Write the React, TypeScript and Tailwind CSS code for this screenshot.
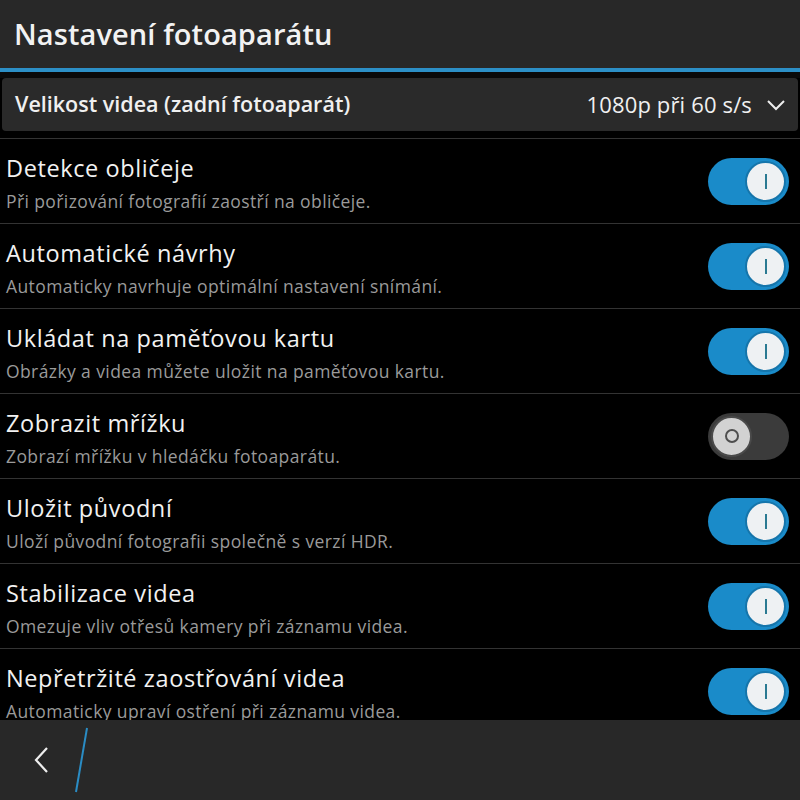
import React from "react";

const rows: { title: string; sub: string; on: boolean }[] = [
  { title: "Detekce obličeje", sub: "Při pořizování fotografií zaostří na obličeje.", on: true },
  { title: "Automatické návrhy", sub: "Automaticky navrhuje optimální nastavení snímání.", on: true },
  { title: "Ukládat na paměťovou kartu", sub: "Obrázky a videa můžete uložit na paměťovou kartu.", on: true },
  { title: "Zobrazit mřížku", sub: "Zobrazí mřížku v hledáčku fotoaparátu.", on: false },
  { title: "Uložit původní", sub: "Uloží původní fotografii společně s verzí HDR.", on: true },
  { title: "Stabilizace videa", sub: "Omezuje vliv otřesů kamery při záznamu videa.", on: true },
  { title: "Nepřetržité zaostřování videa", sub: "Automaticky upraví ostření při záznamu videa.", on: true },
];

function Toggle({ on }: { on: boolean }) {
  if (on) {
    return (
      <div className="w-[81px] h-[47px] shrink-0 rounded-full bg-[#1a8bc9] flex items-center justify-end pr-[3px]">
        <div className="w-[41px] h-[41px] rounded-full bg-[#eef1f3] border-[2px] border-[#1575ab] flex items-center justify-center">
          <div className="w-[2px] h-[15px] bg-[#2a7a92]" />
        </div>
      </div>
    );
  }
  return (
    <div className="w-[81px] h-[47px] shrink-0 rounded-full bg-[#3b3b3b] flex items-center justify-start pl-[3px]">
      <div className="w-[41px] h-[41px] rounded-full bg-[#d2d2d2] border-[2px] border-[#4a4a4a] flex items-center justify-center">
        <div className="w-[14px] h-[14px] rounded-full border-[2px] border-[#4e4e4e]" />
      </div>
    </div>
  );
}

export default function App() {
  return (
    <div
      className="w-[800px] h-[800px] bg-black flex flex-col overflow-hidden text-white"
      style={{ fontFamily: '"Open Sans", "Noto Sans", sans-serif' }}
    >
      <div className="h-[68px] shrink-0 bg-[#282828] flex items-center px-[14px]">
        <span className="text-[29px] font-semibold tracking-[0.1px] text-[#f2f2f2]">Nastavení fotoaparátu</span>
      </div>
      <div className="h-[4px] shrink-0 bg-[#2c8fc6]" />
      <div className="h-[6px] shrink-0 bg-[#0a0a0a]" />
      <div className="h-[53px] shrink-0 mx-[2px] rounded-[4px] bg-[#2a2a2a] flex items-center pl-[13px] pr-[12px]">
        <span className="text-[21.5px] font-semibold tracking-[0px] text-[#f0f0f0]">Velikost videa (zadní fotoaparát)</span>
        <span className="ml-auto text-[22px] tracking-[0.15px] text-[#f0f0f0]">1080p při 60 s/s</span>
        <svg width="20" height="12" viewBox="0 0 20 12" className="ml-[14px]">
          <path d="M2 2 L10 10 L18 2" fill="none" stroke="#eeeeee" strokeWidth="2" />
        </svg>
      </div>
      <div className="h-[7px] shrink-0" />
      <div className="flex-1 min-h-0 overflow-hidden border-t border-[#333333]">
        {rows.map((r, i) => (
          <div key={i} className="h-[85px] border-b border-[#333333] flex items-center pl-[6px] pr-[11px]">
            <div className="flex flex-col flex-1 min-w-0 mt-[4px]">
              <span className="text-[23.5px] leading-[30px] tracking-[0.6px] text-[#f2f2f2] whitespace-nowrap">{r.title}</span>
              <span className="mt-[6px] text-[17.5px] leading-[24px] tracking-[0.4px] text-[#9a9a9a] whitespace-nowrap">{r.sub}</span>
            </div>
            <Toggle on={r.on} />
          </div>
        ))}
      </div>
      <div className="h-[80px] shrink-0 bg-[#282828] flex items-center relative">
        <svg width="20" height="30" viewBox="0 0 20 30" className="ml-[32px]">
          <path d="M15 3 L4 15 L15 27" fill="none" stroke="#eeeeee" strokeWidth="2.2" />
        </svg>
        <svg width="20" height="70" viewBox="0 0 20 70" className="ml-[20px]">
          <path d="M15 3 L4 67" fill="none" stroke="#2a8cc4" strokeWidth="2" />
        </svg>
      </div>
    </div>
  );
}
